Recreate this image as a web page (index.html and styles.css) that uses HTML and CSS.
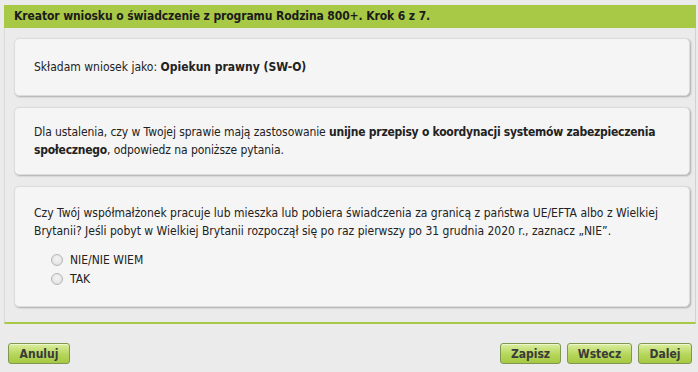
FILE: index.html
```html
<!DOCTYPE html>
<html lang="pl">
<head>
<meta charset="utf-8">
<title>Kreator wniosku</title>
<link rel="stylesheet" href="styles.css">
</head>
<body>
<div class="wizard">
  <div class="wizard-header">Kreator wniosku o świadczenie z programu Rodzina 800+. Krok 6 z 7.</div>
  <div class="wizard-body">
    <div class="card card-role">Składam wniosek jako: <b>Opiekun prawny (SW-O)</b></div>
    <div class="card card-info">Dla ustalenia, czy w Twojej sprawie mają zastosowanie <b>unijne przepisy o koordynacji systemów zabezpieczenia społecznego</b>, odpowiedz na poniższe pytania.</div>
    <div class="card card-question">
      <p class="question">Czy Twój współmałżonek pracuje lub mieszka lub pobiera świadczenia za granicą z państwa UE/EFTA albo z Wielkiej Brytanii? Jeśli pobyt w Wielkiej Brytanii rozpoczął się po raz pierwszy po 31 grudnia 2020 r., zaznacz „NIE”.</p>
      <label class="option"><span class="radio"></span>NIE/NIE WIEM</label>
      <label class="option"><span class="radio"></span>TAK</label>
    </div>
  </div>
  <div class="wizard-footer">
    <button class="btn btn-cancel">Anuluj</button>
    <div class="footer-right">
      <button class="btn btn-save">Zapisz</button>
      <button class="btn btn-back">Wstecz</button>
      <button class="btn btn-next">Dalej</button>
    </div>
  </div>
</div>
</body>
</html>
```
FILE: styles.css
```css
html, body {
  margin: 0;
  padding: 0;
  background: #ebebeb;
}
body {
  font-family: "DejaVu Sans Condensed", "DejaVu Sans", sans-serif;
  font-size: 12px;
  color: #222;
}
.wizard {
  padding: 5px 2px 0 4px;
}
.wizard-header {
  background: #a8c945;
  height: 23px;
  line-height: 23px;
  padding-left: 10px;
  font-weight: bold;
  font-size: 12px;
  letter-spacing: -0.1px;
  color: #1b1b1b;
}
.wizard-body {
  width: 676px;
  border-left: 1px solid #d9d9d9;
  border-right: 1px solid #d2d2d2;
  border-bottom: 2px solid #a8c945;
  padding: 10px 5px 15px 9px;
}
.card {
  background: #f5f5f5;
  border: 1px solid #dcdcdc;
  border-radius: 5px;
  box-shadow: 1px 1px 2px rgba(0,0,0,0.28);
  padding: 0 19px;
  line-height: 18px;
  margin-bottom: 11px;
}
.card:last-child {
  margin-bottom: 0;
}
.card-role {
  padding-top: 19px;
  padding-bottom: 19px;
}
.card-info {
  padding-top: 15px;
  padding-bottom: 15px;
  letter-spacing: -0.08px;
}
.card-info b {
  letter-spacing: -0.25px;
}
.card-question {
  padding-top: 17px;
  padding-bottom: 18px;
}
.question {
  margin: 0 0 10px 0;
}
.option {
  display: flex;
  align-items: center;
  height: 19px;
  padding-left: 17px;
}
.radio {
  width: 10px;
  height: 10px;
  border-radius: 50%;
  border: 1px solid #b5b5b5;
  background: radial-gradient(circle at 50% 40%, #f4f4f4, #dcdcdc);
  margin-right: 7px;
}
.wizard-footer {
  display: flex;
  justify-content: space-between;
  align-items: center;
  padding: 19px 4px 0 4px;
}
.footer-right {
  display: flex;
  gap: 6px;
}
.btn {
  height: 21px;
  border: 1px solid #7f9850;
  border-radius: 3px;
  background: linear-gradient(#dbeea0, #b5d65a 55%, #a6c944);
  box-shadow: inset 0 1px 0 rgba(255,255,255,0.5);
  font-family: "DejaVu Sans Condensed", "DejaVu Sans", sans-serif;
  font-weight: bold;
  font-size: 12px;
  color: #3a3a3a;
  padding: 0;
  cursor: pointer;
}
.btn-cancel { width: 62px; }
.btn-save { width: 61px; }
.btn-back { width: 65px; }
.btn-next { width: 54px; }
```
